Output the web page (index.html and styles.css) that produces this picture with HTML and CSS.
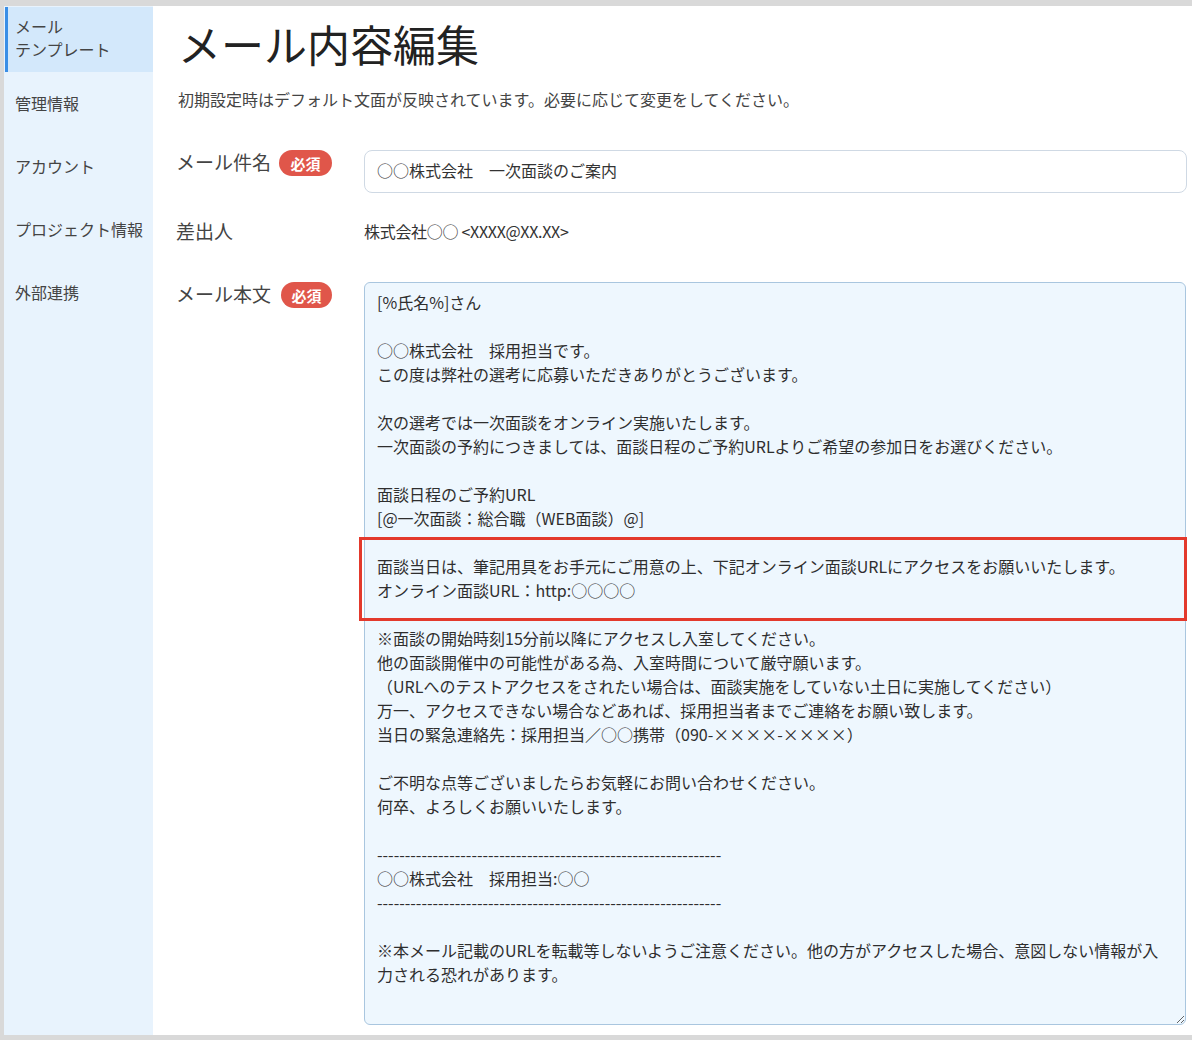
FILE: index.html
```html
<!DOCTYPE html>
<html lang="ja">
<head>
<meta charset="utf-8">
<title>メール内容編集</title>
<link rel="stylesheet" href="styles.css">
</head>
<body>
<div class="frame">
  <nav class="sidebar">
    <a class="nav-item active">メール<br>テンプレート</a>
    <a class="nav-item">管理情報</a>
    <a class="nav-item">アカウント</a>
    <a class="nav-item">プロジェクト情報</a>
    <a class="nav-item">外部連携</a>
  </nav>
  <main class="main">
    <h1 class="title">メール内容編集</h1>
    <p class="lead">初期設定時はデフォルト文面が反映されています。必要に応じて変更をしてください。</p>

    <div class="row row-subject">
      <div class="label"><span class="label-text">メール件名</span><span class="badge">必須</span></div>
      <input class="input" type="text" value="○○株式会社　一次面談のご案内">
    </div>

    <div class="row row-sender">
      <div class="label"><span class="label-text">差出人</span></div>
      <div class="value">株式会社○○ &lt;XXXX@XX.XX&gt;</div>
    </div>

    <div class="row row-body">
      <div class="label"><span class="label-text">メール本文</span><span class="badge">必須</span></div>
      <div class="body-wrap">
        <textarea class="textarea">[%氏名%]さん

○○株式会社　採用担当です。
この度は弊社の選考に応募いただきありがとうございます。

次の選考では一次面談をオンライン実施いたします。
一次面談の予約につきましては、面談日程のご予約URLよりご希望の参加日をお選びください。

面談日程のご予約URL
[@一次面談：総合職（WEB面談）@]

面談当日は、筆記用具をお手元にご用意の上、下記オンライン面談URLにアクセスをお願いいたします。
オンライン面談URL：http:○○○○

※面談の開始時刻15分前以降にアクセスし入室してください。
他の面談開催中の可能性がある為、入室時間について厳守願います。
（URLへのテストアクセスをされたい場合は、面談実施をしていない土日に実施してください）
万一、アクセスできない場合などあれば、採用担当者までご連絡をお願い致します。
当日の緊急連絡先：採用担当／○○携帯（090-××××-××××）

ご不明な点等ございましたらお気軽にお問い合わせください。
何卒、よろしくお願いいたします。

--------------------------------------------------------------
○○株式会社　採用担当:○○
--------------------------------------------------------------

※本メール記載のURLを転載等しないようご注意ください。他の方がアクセスした場合、意図しない情報が入力される恐れがあります。</textarea>
        <div class="highlight"></div>
      </div>
    </div>
  </main>
</div>
</body>
</html>
```

FILE: styles.css
```css
* { box-sizing: border-box; }

html, body {
  margin: 0;
  padding: 0;
}

body {
  background: #d9d9d9;
  font-family: "Noto Sans CJK JP", "Noto Sans", sans-serif;
  color: #333;
  padding: 6px 0 5px 4px;
  width: 1192px;
  height: 1040px;
  overflow: hidden;
}

.frame {
  display: flex;
  height: 1029px;
  background: #fff;
}

.sidebar {
  width: 149px;
  flex: none;
  background: #e8f3fd;
  padding-top: 1px;
  display: flex;
  flex-direction: column;
}

.nav-item {
  display: flex;
  align-items: center;
  height: 63px;
  padding-left: 11px;
  font-size: 16px;
  line-height: 23px;
  color: #444;
  text-decoration: none;
}

.nav-item.active {
  height: 65px;
  background: #d3e8fb;
  border-left: 3px solid #3a8ee6;
  margin-left: 1px;
  padding-left: 7px;
  padding-bottom: 4px;
}

.main {
  flex: 1;
  padding: 12px 5px 0 23px;
}

.title {
  margin: 0 0 0 2px;
  font-size: 43px;
  line-height: 50px;
  font-weight: 400;
  color: #222;
}

.lead {
  margin: 19px 0 0 2px;
  font-size: 16px;
  line-height: 24px;
  color: #444;
}

.row {
  display: flex;
  align-items: flex-start;
}

.row-subject { margin-top: 39px; }
.row-sender { margin-top: 26px; }
.row-body { margin-top: 39px; }

.label {
  width: 188px;
  flex: none;
  display: flex;
  align-items: flex-start;
  gap: 8px;
}

.label-text {
  font-size: 19px;
  line-height: 24px;
  color: #444;
}

.badge {
  display: inline-flex;
  align-items: center;
  justify-content: center;
  width: 53px;
  height: 26px;
  border-radius: 13px;
  background: #e0564a;
  color: #fff;
  font-size: 15px;
  font-weight: 700;
}

.row-body .badge { margin-left: 2px; width: 51px; }

.input {
  width: 823px;
  height: 43px;
  border: 1.5px solid #cfd9e4;
  border-radius: 8px;
  padding: 0 12px 4px;
  font-family: inherit;
  font-size: 16px;
  color: #333;
  background: #fff;
  outline: none;
}

.value {
  font-size: 16px;
  line-height: 24px;
  color: #333;
  letter-spacing: -0.3px;
}

.body-wrap {
  position: relative;
  width: 822px;
  height: 743px;
}

.textarea {
  display: block;
  width: 822px;
  height: 743px;
  border: 1.5px solid #a9c6df;
  border-radius: 6px;
  background: #eef7fe;
  padding: 7px 12px;
  font-family: inherit;
  font-size: 16px;
  line-height: 24px;
  color: #2e2e2e;
  resize: both;
  outline: none;
  overflow: hidden;
}

.highlight {
  position: absolute;
  left: -5px;
  top: 255px;
  width: 828px;
  height: 84px;
  border: 3px solid #e3392c;
  pointer-events: none;
}
```
